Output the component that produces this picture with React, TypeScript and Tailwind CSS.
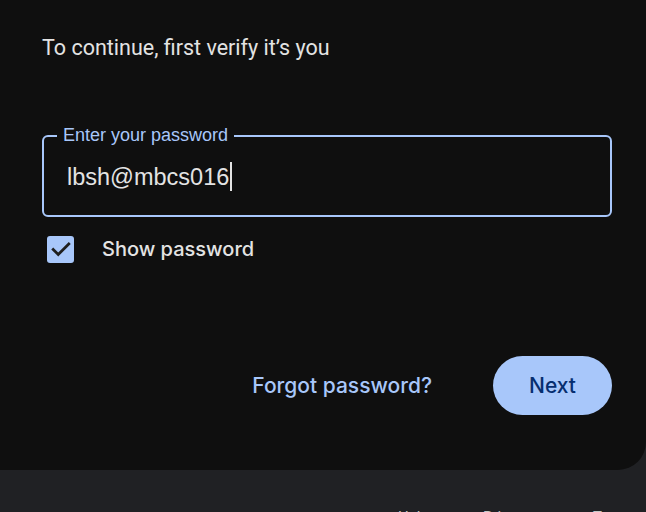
import React from "react";

export default function App() {
  return (
    <div className="w-[646px] h-[512px] overflow-hidden bg-[#202124] font-['Roboto',sans-serif]">
      {/* card */}
      <div className="h-[470px] bg-[#0f0f0f] rounded-br-[28px] pl-[42px] pr-[34px] pt-[35px]">
        <p className="text-[21.5px] leading-[26px] text-[#e3e3e3]">To continue, first verify it’s you</p>

        {/* password field */}
        <div className="relative mt-[74px] h-[82px] rounded-[6px] border-2 border-[#a8c7fa] pl-[23px] flex items-center">
          <span className="absolute -top-[13px] left-[13px] bg-[#0f0f0f] px-[6px] text-[18px] leading-[22px] text-[#a8c7fa] font-['Liberation_Sans',sans-serif]">
            Enter your password
          </span>
          <span className="text-[23.5px] leading-[30px] text-[#e3e3e3] font-['Liberation_Sans',sans-serif] mt-[1px]">lbsh@mbcs016</span>
          <span className="ml-[1px] w-[2px] h-[29px] bg-[#e3e3e3]" />
        </div>

        {/* show password */}
        <div className="mt-[17px] ml-[5px] flex items-center">
          <div className="w-[27px] h-[27px] rounded-[3px] bg-[#a8c7fa] flex items-center justify-center">
            <svg width="22" height="22" viewBox="0 0 24 24" fill="none" stroke="#1f1f1f" strokeWidth="3" strokeLinecap="square">
              <path d="M3.5 12.5l5.5 5.5L20.5 6.5" />
            </svg>
          </div>
          <span className="ml-[28px] text-[20px] font-medium text-[#e3e3e3] font-['Inter',sans-serif]">Show password</span>
        </div>

        {/* actions */}
        <div className="mt-[92px] flex items-center justify-end">
          <button className="mr-[61px] text-[21px] font-medium text-[#a8c7fa] font-['Inter',sans-serif]">Forgot password?</button>
          <button className="w-[119px] h-[59px] rounded-full bg-[#a8c7fa] text-[21px] font-medium text-[#062e6f] font-['Inter',sans-serif]">
            Next
          </button>
        </div>
      </div>

      {/* footer */}
      <div className="flex pl-[398px] pt-[37px] text-[15px] leading-[20px] text-[#c4c7c5]">
        <span className="w-[85px]">Help</span>
        <span className="w-[110px]">Privacy</span>
        <span>Terms</span>
      </div>
    </div>
  );
}
